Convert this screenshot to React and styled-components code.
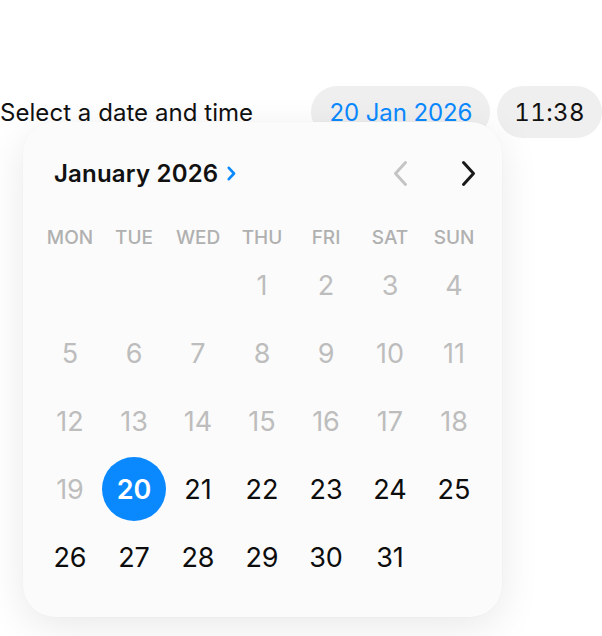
import React from "react";
import styled, { createGlobalStyle } from "styled-components";

const GlobalStyle = createGlobalStyle`
  body {
    margin: 0;
    background: #ffffff;
    font-family: Inter, "Noto Sans", sans-serif;
    color: #111111;
  }
`;

const BLUE = "#0a89ff";

const Page = styled.div`
  position: relative;
  width: 602px;
  height: 636px;
  padding-top: 86px;
  box-sizing: border-box;
  overflow: hidden;
`;

const FieldRow = styled.div`
  display: flex;
  align-items: center;
  justify-content: space-between;
  height: 52px;
`;

const Label = styled.span`
  font-size: 24px;
  letter-spacing: 0.05px;
  padding-top: 1px;
`;

const Pills = styled.div`
  display: flex;
  gap: 7px;
`;

const Pill = styled.button`
  height: 52px;
  padding: 0 ${({ tabular }) => (tabular ? 17 : 18)}px;
  border: none;
  border-radius: 26px;
  background: #efefef;
  font-family: inherit;
  font-size: 24px;
  letter-spacing: ${({ tabular }) => (tabular ? "0.4px" : "-0.1px")};
  font-variant-numeric: ${({ tabular }) => (tabular ? "tabular-nums" : "normal")};
  color: ${({ active }) => (active ? BLUE : "#111111")};
`;

const Popover = styled.div`
  position: absolute;
  top: 122px;
  left: 23px;
  width: 479px;
  box-sizing: border-box;
  padding: 29px 16px 26px 15px;
  border-radius: 32px;
  background: #fbfbfb;
  box-shadow: 0 10px 40px rgba(0, 0, 0, 0.09), 0 0 2px rgba(0, 0, 0, 0.03);
`;

const Header = styled.div`
  display: flex;
  align-items: center;
  justify-content: space-between;
  height: 44px;
  padding-left: 16px;
`;

const Month = styled.div`
  display: flex;
  align-items: center;
  gap: 9px;
  font-size: 24px;
  font-weight: 600;
  letter-spacing: 0.2px;
`;

const Nav = styled.div`
  display: flex;
  gap: 32px;
`;

const NavButton = styled.button`
  width: 36px;
  height: 36px;
  display: flex;
  align-items: center;
  justify-content: center;
  border: none;
  background: none;
  padding: 0;
  color: ${({ disabled }) => (disabled ? "#c4c4c4" : "#1a1a1a")};
`;

const Grid = styled.div`
  display: grid;
  grid-template-columns: repeat(7, 64px);
`;

const WeekDays = styled(Grid)`
  margin-top: 30px;
  height: 24px;
  margin-bottom: 2px;
`;

const WeekDay = styled.div`
  display: flex;
  align-items: center;
  justify-content: center;
  font-size: 19px;
  font-weight: 500;
  color: #b0b0b0;
`;

const Day = styled.div`
  height: 68px;
  display: flex;
  align-items: center;
  justify-content: center;
`;

const DayNumber = styled.span`
  width: 64px;
  height: 64px;
  border-radius: 50%;
  display: flex;
  align-items: center;
  justify-content: center;
  font-size: 27px;
  font-weight: ${({ selected }) => (selected ? 600 : 400)};
  background: ${({ selected }) => (selected ? BLUE : "transparent")};
  color: ${({ selected, muted }) =>
    selected ? "#ffffff" : muted ? "#bdbdbd" : "#0d0d0d"};
`;

const Chevron = ({ dir = "right" }) => (
  <svg width="15" height="27" viewBox="0 0 15 27" fill="none">
    <polyline
      points={dir === "right" ? "2.5,2.5 12.5,13.5 2.5,24.5" : "12.5,2.5 2.5,13.5 12.5,24.5"}
      stroke="currentColor"
      strokeWidth="3"
      strokeLinecap="round"
      strokeLinejoin="round"
    />
  </svg>
);

const SmallChevron = () => (
  <svg width="9" height="15" viewBox="0 0 9 15" fill="none">
    <polyline
      points="1.8,1.8 7,7.5 1.8,13.2"
      stroke={BLUE}
      strokeWidth="2.6"
      strokeLinecap="round"
      strokeLinejoin="round"
    />
  </svg>
);

const weekDays = ["MON", "TUE", "WED", "THU", "FRI", "SAT", "SUN"];
const today = 19;
const selected = 20;
// January 2026 starts on a Thursday
const leading = 3;

export default function App() {
  const cells = [];
  for (let i = 0; i < leading; i++) cells.push(null);
  for (let d = 1; d <= 31; d++) cells.push(d);

  return (
    <>
      <GlobalStyle />
      <Page>
        <FieldRow>
          <Label>Select a date and time</Label>
          <Pills>
            <Pill active>20 Jan 2026</Pill>
            <Pill tabular>11:38</Pill>
          </Pills>
        </FieldRow>

        <Popover>
          <Header>
            <Month>
              January 2026
              <SmallChevron />
            </Month>
            <Nav>
              <NavButton disabled>
                <Chevron dir="left" />
              </NavButton>
              <NavButton>
                <Chevron dir="right" />
              </NavButton>
            </Nav>
          </Header>

          <WeekDays>
            {weekDays.map((w) => (
              <WeekDay key={w}>{w}</WeekDay>
            ))}
          </WeekDays>

          <Grid>
            {cells.map((d, i) => (
              <Day key={i}>
                {d && (
                  <DayNumber selected={d === selected} muted={d <= today}>
                    {d}
                  </DayNumber>
                )}
              </Day>
            ))}
          </Grid>
        </Popover>
      </Page>
    </>
  );
}
